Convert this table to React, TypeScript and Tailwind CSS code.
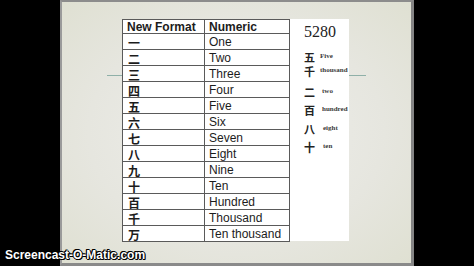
const rows: [string, string][] = [
  ['一', 'One'],
  ['二', 'Two'],
  ['三', 'Three'],
  ['四', 'Four'],
  ['五', 'Five'],
  ['六', 'Six'],
  ['七', 'Seven'],
  ['八', 'Eight'],
  ['九', 'Nine'],
  ['十', 'Ten'],
  ['百', 'Hundred'],
  ['千', 'Thousand'],
  ['万', 'Ten thousand'],
];

const cjk = "font-['Noto_Sans_CJK_SC',sans-serif]";

const Example = ({ char, label, top, shift }: { char: string; label: string; top: string; shift: string }) => (
  <div className={`flex items-center h-[14px] ${top}`}>
    <span className={`w-[16px] text-[11px] leading-[11px] font-bold text-[#222] ${cjk}`}>{char}</span>
    <span className={`text-[7px] leading-none font-bold text-[#3a3a3a] font-['Liberation_Serif',serif] -mt-[2px] ${shift}`}>
      {label}
    </span>
  </div>
);

export default function App() {
  return (
    <div className="relative flex w-[474px] h-[266px] bg-black overflow-hidden antialiased">
      <div className="w-[60px] shrink-0" />
      <div className="w-[354px] h-full shrink-0 border-t-2 border-l-2 border-r-[3px] border-b-[3px] border-t-[#8c8c8c] border-l-[#9a9a9a] border-r-[#858585] border-b-[#8a8a8a] bg-[radial-gradient(ellipse_at_center,#efefec_0%,#e6e6df_60%,#dfe0d2_100%)]">
        <div className="flex items-start pt-[17px] pl-[45px]">
          <div className="w-[15px] h-px mt-[56px] bg-[#8fb0a8]" />
          <div className="flex w-[227px] h-[222px] bg-white">
            <table className="w-[167px] h-[222px] table-fixed border-collapse font-['Liberation_Sans',sans-serif] text-[12px] text-[#1c1c1c]">
              <colgroup>
                <col className="w-[82px]" />
                <col className="w-[85px]" />
              </colgroup>
              <thead>
                <tr className="h-[14px]">
                  <th className="border border-[#5a5a5a] pl-[4px] text-left font-bold leading-none">New Format</th>
                  <th className="border border-[#5a5a5a] pl-[4px] text-left font-bold leading-none">Numeric</th>
                </tr>
              </thead>
              <tbody>
                {rows.map(([c, n]) => (
                  <tr key={n} className="h-[16px]">
                    <td className={`border border-[#5a5a5a] pl-[5px] pt-[2px] leading-none font-bold ${cjk}`}>{c}</td>
                    <td className="border border-[#5a5a5a] pl-[4px] leading-none">{n}</td>
                  </tr>
                ))}
              </tbody>
            </table>
            <div className="flex flex-col pl-[14px]">
              <div className="mt-[5px] h-[16px] text-[16px] leading-none text-[#222] font-['Liberation_Serif',serif]">5280</div>
              <Example char="五" label="Five" top="mt-[10px]" shift="ml-0" />
              <Example char="千" label="thousand" top="mt-0" shift="ml-0" />
              <Example char="二" label="two" top="mt-[7px]" shift="ml-[2px]" />
              <Example char="百" label="hundred" top="mt-[4px]" shift="ml-[2px]" />
              <Example char="八" label="eight" top="mt-[5px]" shift="ml-[3px]" />
              <Example char="十" label="ten" top="mt-[4px]" shift="ml-[3px]" />
            </div>
          </div>
          <div className="w-[17px] h-px mt-[56px] bg-[#8fb0a8]" />
        </div>
      </div>
      <div className="absolute left-[5px] top-[249px] text-[12px] leading-none font-bold text-white font-['Liberation_Sans',sans-serif] [text-shadow:-1px_0_#000,1px_0_#000,0_-1px_#000,0_1px_#000,1px_1px_#000,-1px_-1px_#000]">
        Screencast-O-Matic.com
      </div>
    </div>
  );
}
